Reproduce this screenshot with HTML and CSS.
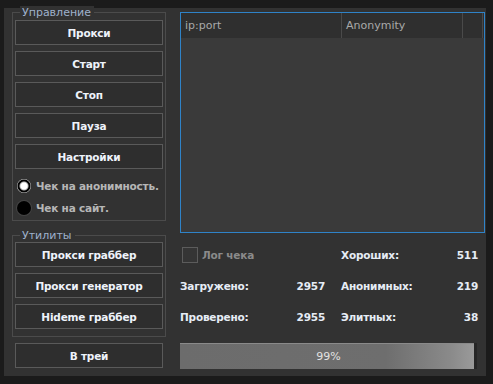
FILE: index.html
```html
<!DOCTYPE html>
<html lang="ru">
<head>
  <meta charset="UTF-8">
  <title>Proxy checker</title>
  <link rel="stylesheet" href="styles.css">
</head>
<body>
  <div class="window">
    <div class="side">
      <div class="group">
        <span class="legend">Управление</span>
        <button class="btn">Прокси</button>
        <button class="btn">Старт</button>
        <button class="btn">Стоп</button>
        <button class="btn">Пауза</button>
        <button class="btn">Настройки</button>
        <label class="radio first"><span class="dot checked"></span>Чек на анонимность.</label>
        <label class="radio"><span class="dot"></span>Чек на сайт.</label>
      </div>

      <div class="group utils">
        <span class="legend">Утилиты</span>
        <button class="btn">Прокси граббер</button>
        <button class="btn">Прокси генератор</button>
        <button class="btn">Hideme граббер</button>
      </div>

      <button class="btn tray">В трей</button>
    </div>

    <div class="main">
      <div class="list">
        <div class="list-head">
          <div class="col col-ip">ip:port</div>
          <div class="col col-anon">Anonymity</div>
          <div class="col col-rest"></div>
        </div>
      </div>

      <div class="stats">
        <div class="cell"><label class="check"><span class="box"></span>Лог чека</label></div>
        <div class="cell"><span>Хороших:</span><span>511</span></div>
        <div class="cell"><span>Загружено:</span><span>2957</span></div>
        <div class="cell"><span>Анонимных:</span><span>219</span></div>
        <div class="cell"><span>Проверено:</span><span>2955</span></div>
        <div class="cell"><span>Элитных:</span><span>38</span></div>
      </div>

      <div class="progress">
        <div class="fill" style="width: 99%"></div>
        <span class="pct">99%</span>
      </div>
    </div>
  </div>
</body>
</html>
```

FILE: styles.css
```css
body {
  margin: 0;
  background-color: #1b1b1b;
  font-family: "DejaVu Sans", Verdana, sans-serif;
  font-size: 11px;
}

.window {
  display: flex;
  gap: 14px;
  width: 482px;
  height: 368px;
  margin: 8px 0 0 4px;
  padding: 4px 0 0 8px;
  box-sizing: border-box;
  background-color: #323232;
}

.side {
  width: 154px;
  display: flex;
  flex-direction: column;
}

.group {
  position: relative;
  padding: 7px 2px 4px 2px;
  border: 1px solid #4b4b4b;
  display: flex;
  flex-direction: column;
  gap: 6px;
}

/* caption sits on top of the frame line */
.legend {
  position: absolute;
  top: -7px;
  left: 7px;
  padding: 0 3px 0 2px;
  line-height: 13px;
  background-color: #323232;
  color: #9fb1cc;
  font-size: 11px;
}

.utils {
  margin-top: 14px;
  padding: 6px 2px 7px 2px;
}

.btn {
  height: 25px;
  width: 148px;
  margin: 0;
  padding: 0;
  border: 1px solid #5a5a5a;
  background-color: #2e2e2e;
  color: #eef3fb;
  font-family: "DejaVu Sans", Verdana, sans-serif;
  font-size: 10.5px;
  font-weight: bold;
  letter-spacing: -0.2px;
}

.tray {
  margin: 6px 0 0 3px;
}

.radio {
  display: flex;
  align-items: center;
  gap: 5px;
  height: 16px;
  margin-left: 2px;
  color: #b6b6b6;
  font-weight: bold;
  font-size: 10.5px;
  letter-spacing: -0.2px;
}

.radio.first {
  margin-top: 3px;
}

.dot {
  width: 14px;
  height: 14px;
  border-radius: 50%;
  background-color: #000;
  box-shadow: 0 0 0 1px #444;
  box-sizing: border-box;
}

.dot.checked {
  background: radial-gradient(circle, #fff 0 3px, #bbb 4px, #000 5px 6px, #ddd 7px);
  box-shadow: none;
}

.main {
  width: 305px;
  display: flex;
  flex-direction: column;
}

.list {
  height: 221px;
  border: 1px solid #2f83c8;
  background-color: #3a3a3a;
  box-sizing: border-box;
}

.list-head {
  display: flex;
  height: 25px;
  background-color: #2f2f2f;
  color: #a9a9a9;
}

.col {
  display: flex;
  align-items: center;
  padding-left: 4px;
  border-right: 1px solid #4a4a4a;
  box-sizing: border-box;
}

.col-ip {
  width: 161px;
}

.col-anon {
  width: 121px;
}

.col-rest {
  width: 20px;
}

.stats {
  display: grid;
  grid-template-columns: 145px 137px;
  column-gap: 16px;
  grid-auto-rows: 31px;
  margin-top: 6px;
  color: #e6ecf5;
  font-weight: bold;
  font-size: 10.5px;
  letter-spacing: -0.2px;
}

.cell {
  display: flex;
  align-items: center;
  justify-content: space-between;
}

.check {
  display: flex;
  align-items: center;
  gap: 4px;
  margin-left: 2px;
  color: #8a8a8a;
}

.box {
  width: 16px;
  height: 16px;
  border: 1px solid #5c5c5c;
  background-color: #353535;
  box-sizing: border-box;
}

.progress {
  position: relative;
  width: 297px;
  height: 26px;
  margin-top: 11px;
  background-color: #262626;
}

.fill {
  height: 100%;
  background: linear-gradient(to right, #6c6c6c 0%, #6e6e6e 70%, #8a8a8a 92%, #9a9a9a 100%);
  border-top: 1px solid #8a8a8a;
  box-sizing: border-box;
}

.pct {
  position: absolute;
  inset: 0;
  display: flex;
  align-items: center;
  justify-content: center;
  color: #e2e2e2;
  font-size: 11px;
}
```
